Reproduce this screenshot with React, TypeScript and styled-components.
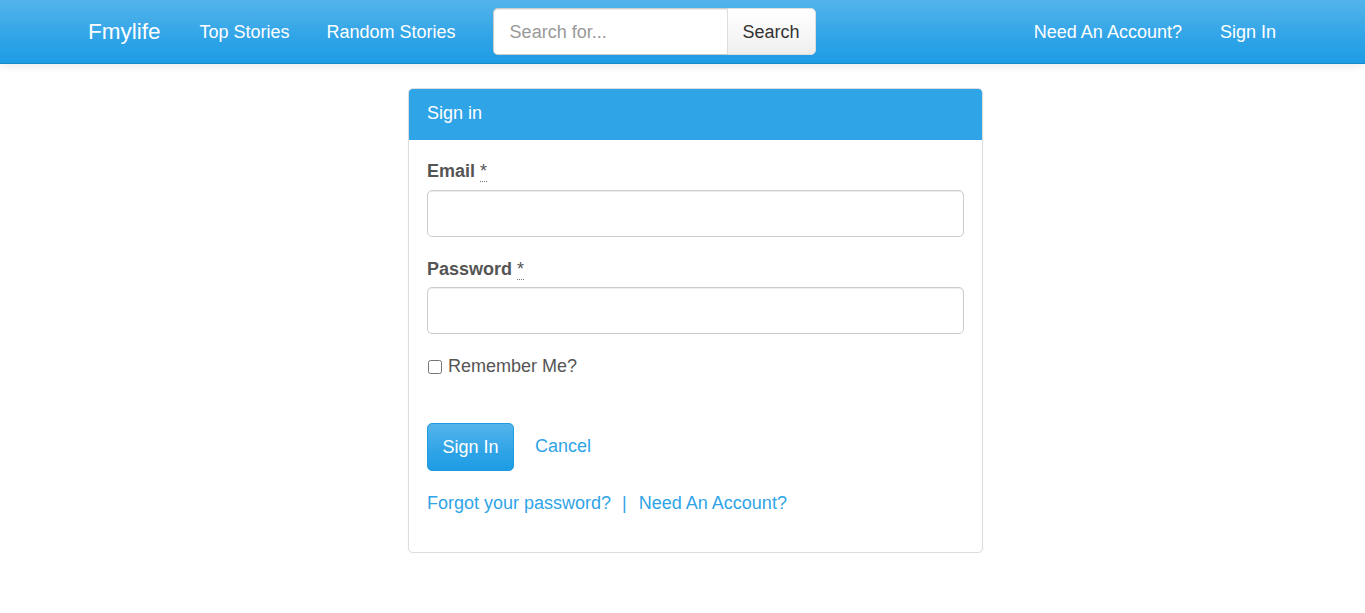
import React from "react";
import styled, { createGlobalStyle } from "styled-components";

const Global = createGlobalStyle`
  * { box-sizing: border-box; }
  html, body { margin: 0; padding: 0; background: #fff; }
  body {
    font-family: "Liberation Sans", Arial, Helvetica, sans-serif;
    font-size: 18px;
    line-height: 1.42857;
    color: #555555;
  }
`;

const NavBar = styled.header`
  height: 64px;
  background-image: linear-gradient(#54b4eb, #2fa4e7 60%, #1d9ce5);
  border-bottom: 1px solid #178acc;
  box-shadow: 0 1px 10px rgba(0, 0, 0, 0.1);
  display: flex;
  align-items: center;
  padding: 0 89px 0 88px;
`;

const Brand = styled.a`
  font-size: 22.5px;
  color: #fff;
  text-decoration: none;
  margin-right: 39px;
  line-height: 1;
  padding-top: 2px;
`;

const NavLink = styled.a<{ $gap?: number }>`
  color: #fff;
  text-decoration: none;
  font-size: 18px;
  padding-top: 2px;
  margin-right: ${(p) => p.$gap ?? 0}px;
`;

const SearchForm = styled.form`
  display: flex;
  margin-left: 37px;
  height: 47px;
`;

const SearchInput = styled.input`
  width: 234px;
  height: 47px;
  border: 1px solid #cccccc;
  border-right: none;
  border-radius: 5px 0 0 5px;
  padding: 2px 16px 0;
  font-family: inherit;
  font-size: 18px;
  color: #555;
  background: #fff;
  outline: none;
  box-shadow: inset 0 1px 1px rgba(0, 0, 0, 0.075);
  &::placeholder { color: #999; }
`;

const SearchButton = styled.button`
  width: 89px;
  height: 47px;
  border: 1px solid #dddddd;
  border-radius: 0 5px 5px 0;
  background-image: linear-gradient(#ffffff, #f6f6f6 60%, #eeeeee);
  color: #333;
  font-family: inherit;
  font-size: 18px;
  padding: 2px 0 0;
`;

const Spacer = styled.div`
  flex: 1;
`;

const Main = styled.main`
  display: flex;
  padding: 24px 0 0 408px;
`;

const Panel = styled.section`
  width: 575px;
  border: 1px solid #dddddd;
  border-radius: 5px;
  background: #fff;
  box-shadow: 0 1px 2px rgba(0, 0, 0, 0.05);
  overflow: hidden;
`;

const PanelHeading = styled.div`
  height: 51px;
  background: #2fa4e7;
  border-bottom: 1px solid #2fa4e7;
  color: #fff;
  display: flex;
  align-items: center;
  padding: 0 18px;
  font-size: 18px;
`;

const PanelBody = styled.div`
  padding: 19px 18.5px 35px 18px;
`;

const FormGroup = styled.div`
  margin-bottom: 20px;
`;

const Label = styled.label`
  display: block;
  font-weight: bold;
  color: #555;
  margin-bottom: 5px;
`;

const Req = styled.abbr`
  font-weight: normal;
  text-decoration: none;
  border-bottom: 1px dotted #777;
  cursor: help;
`;

const TextField = styled.input`
  display: block;
  width: 100%;
  height: 47px;
  border: 1px solid #cccccc;
  border-radius: 5px;
  padding: 8px 15px;
  font-family: inherit;
  font-size: 18px;
  background: #fff;
  outline: none;
  box-shadow: inset 0 1px 1px rgba(0, 0, 0, 0.075);
`;

const CheckRow = styled.label`
  display: flex;
  align-items: center;
  gap: 6px;
  color: #555;
  margin-top: 5px;
  margin-left: 1px;
`;

const Check = styled.input`
  width: 14px;
  height: 14px;
  margin: 0;
  accent-color: #2fa4e7;
`;

const Actions = styled.div`
  display: flex;
  align-items: center;
  margin-top: 43px;
  gap: 21px;
`;

const PrimaryButton = styled.button`
  width: 87px;
  height: 48px;
  border: 1px solid #1f9bdf;
  border-radius: 5px;
  background-image: linear-gradient(#54b4eb, #2fa4e7 60%, #1d9ce5);
  color: #fff;
  font-family: inherit;
  font-size: 18px;
  padding: 0;
`;

const Link = styled.a`
  color: #2fa4e7;
  text-decoration: none;
`;

const LinksRow = styled.div`
  margin-top: 20px;
  display: flex;
  align-items: center;
`;

const Sep = styled.span`
  color: #2fa4e7;
  margin: 0 12px 0 11px;
`;

export default function App() {
  return (
    <>
      <Global />
      <NavBar>
        <Brand href="#">Fmylife</Brand>
        <NavLink href="#" $gap={37}>Top Stories</NavLink>
        <NavLink href="#">Random Stories</NavLink>
        <SearchForm onSubmit={(e) => e.preventDefault()}>
          <SearchInput placeholder="Search for..." />
          <SearchButton type="submit">Search</SearchButton>
        </SearchForm>
        <Spacer />
        <NavLink href="#" $gap={38}>Need An Account?</NavLink>
        <NavLink href="#">Sign In</NavLink>
      </NavBar>
      <Main>
        <Panel>
          <PanelHeading>Sign in</PanelHeading>
          <PanelBody>
            <FormGroup>
              <Label>
                Email <Req title="required">*</Req>
              </Label>
              <TextField type="email" />
            </FormGroup>
            <FormGroup>
              <Label>
                Password <Req title="required">*</Req>
              </Label>
              <TextField type="password" />
            </FormGroup>
            <CheckRow>
              <Check type="checkbox" />
              Remember Me?
            </CheckRow>
            <Actions>
              <PrimaryButton type="button">Sign In</PrimaryButton>
              <Link href="#">Cancel</Link>
            </Actions>
            <LinksRow>
              <Link href="#">Forgot your password?</Link>
              <Sep>|</Sep>
              <Link href="#">Need An Account?</Link>
            </LinksRow>
          </PanelBody>
        </Panel>
      </Main>
    </>
  );
}
